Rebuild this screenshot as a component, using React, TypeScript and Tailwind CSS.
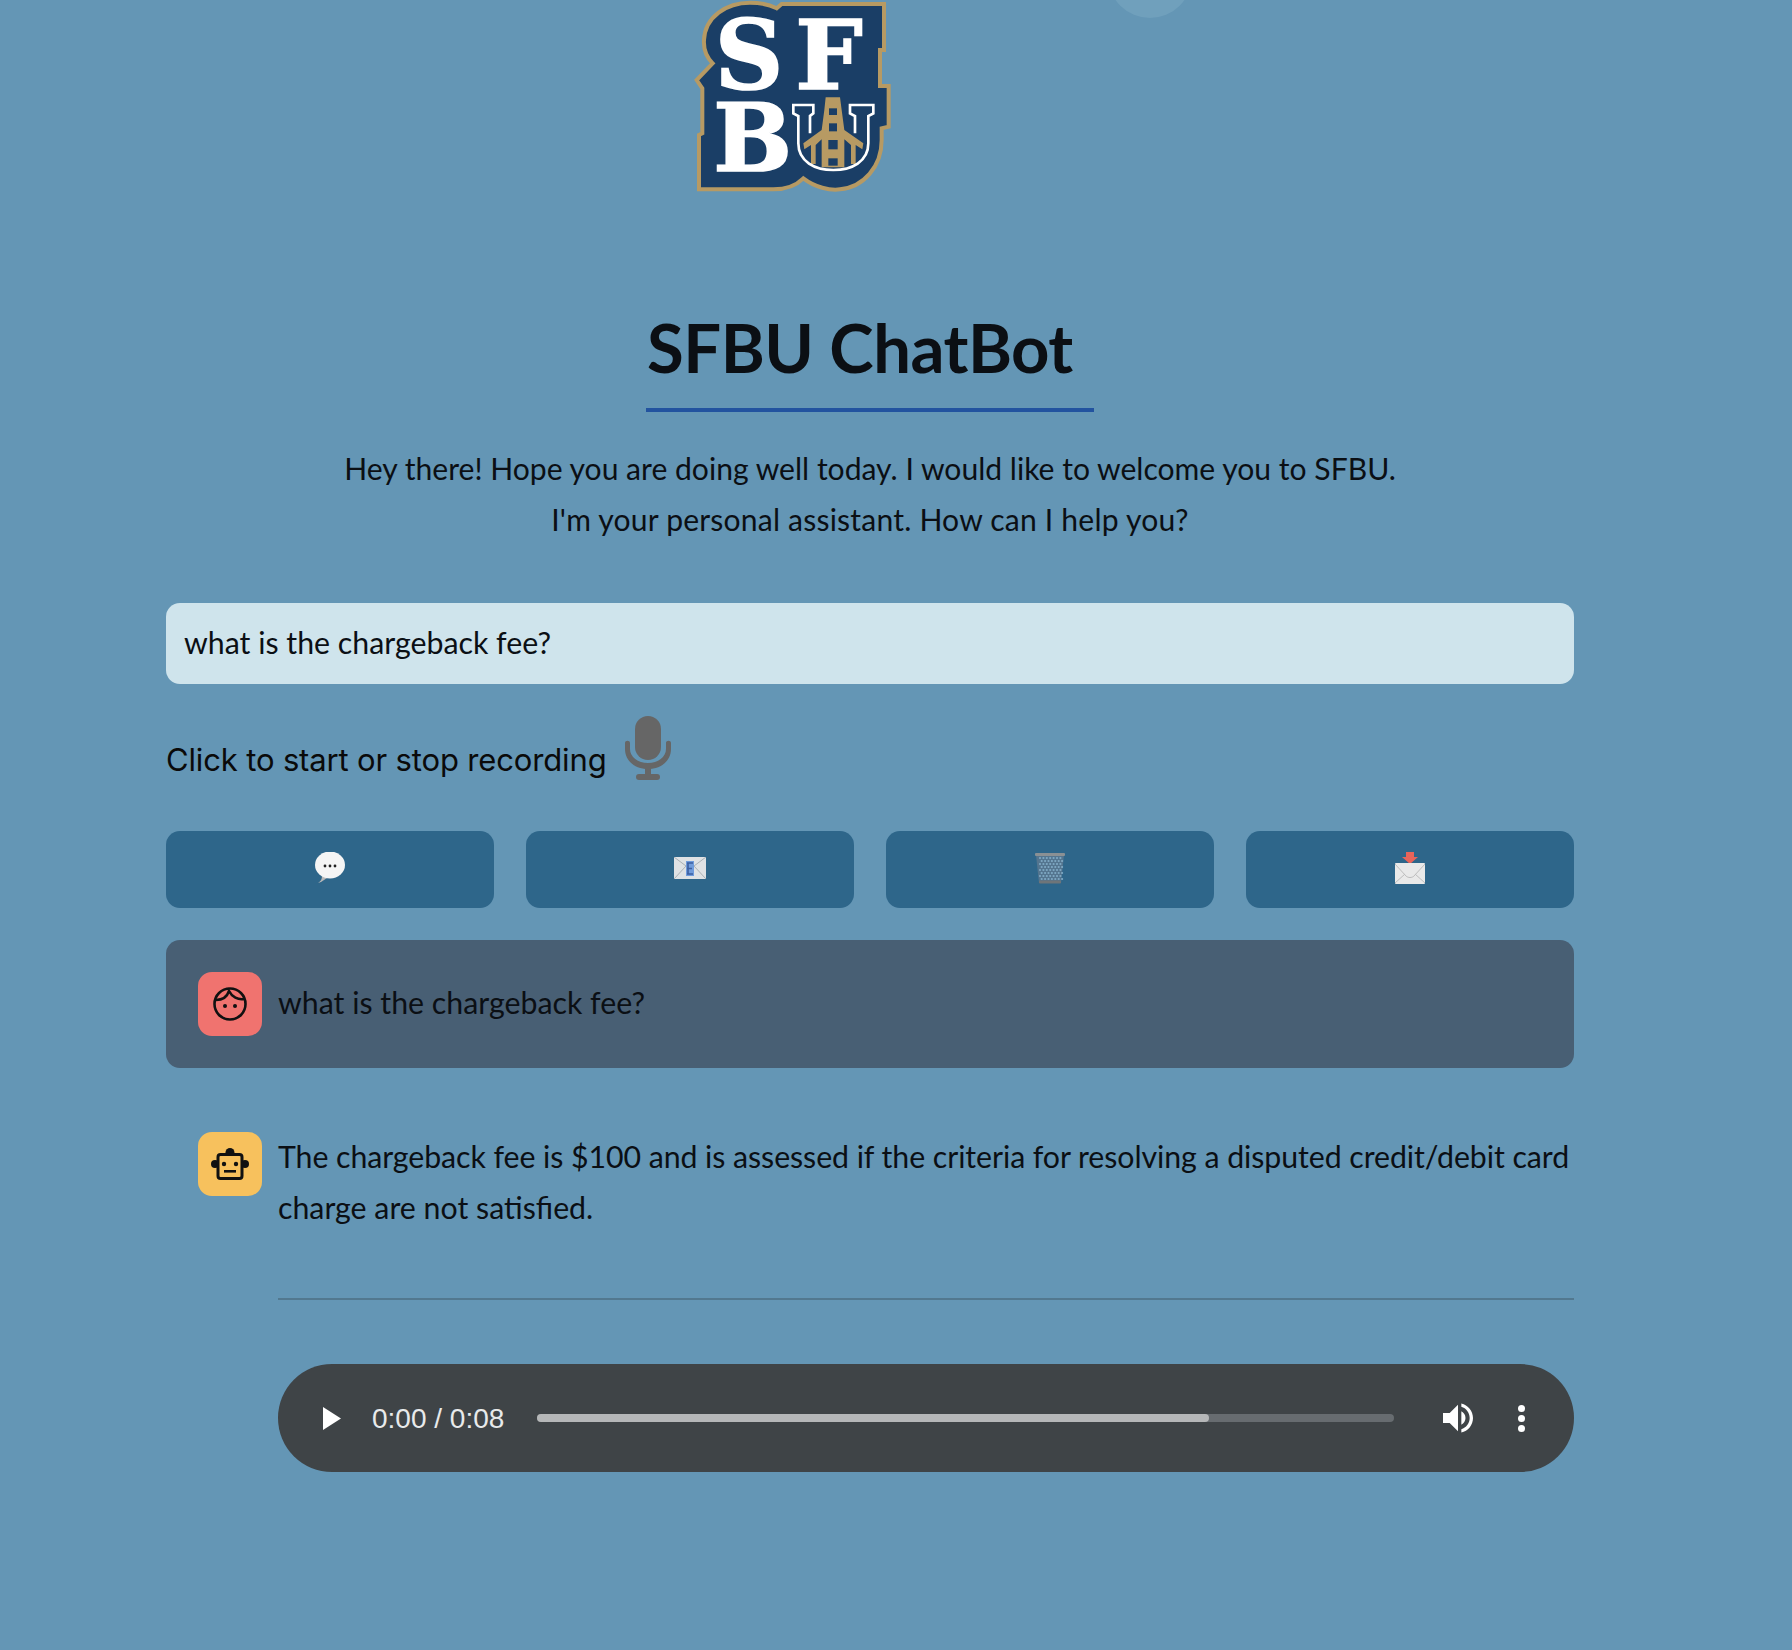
function Logo() {
  return (
    <svg viewBox="0 0 780 630" className="block w-[260px] h-[210px]">
      {/* badge */}
      <path
        d="M270 8C200 8 135 50 132 120C130 150 140 172 158 190L110 240L127 265V400L117 405V568H340C380 568 410 555 430 535C465 562 510 572 540 568C610 562 665 500 665 420V385L686 380V258H660V150H672V12H365L350 25C325 12 300 8 270 8Z"
        fill="#1a3e66"
        stroke="#b79a63"
        strokeWidth="12"
      />
      <g fill="#fff" stroke="#fff" strokeWidth="5" className="font-['DejaVu_Serif',serif] font-bold">
        <text x="164" y="268" fontSize="285">S</text>
        <text x="406" y="266" fontSize="285">F</text>
        <text x="160" y="513" fontSize="280">B</text>
      </g>
      {/* U with the bridge */}
      <g transform="translate(375 270)">
        <path d="M122 22H165L170 60L178 120L235 160L232 178L212 165V222H198V165L178 148V232H110V148L92 165V222H78V165L58 178L55 160L110 120L118 60Z" fill="#b79a63" />
        <g fill="#1a3e66">
          <rect x="132" y="55" width="24" height="20" />
          <rect x="132" y="100" width="24" height="24" />
          <rect x="130" y="150" width="28" height="28" />
          <rect x="130" y="205" width="28" height="22" />
        </g>
        <path
          d="M75 130V78L85 70V45H25V70L40 78V160C40 215 90 240 145 240C200 240 250 215 250 160V78L265 70V45H195V70L210 78V130"
          fill="none"
          stroke="#fff"
          strokeWidth="8"
        />
      </g>
    </svg>
  );
}

function MicIcon() {
  return (
    <svg viewBox="0 0 46 64" className="w-[46px] h-[64px]" fill="#666">
      <rect x="10" y="0" width="26" height="44" rx="13" />
      <path d="M0 27C0 24 5 24 5 27V33C5 41 13 47 23 47C33 47 41 41 41 33V27C41 24 46 24 46 27V33C46 45 36 53 23 53C10 53 0 45 0 33Z" />
      <rect x="20" y="52" width="6" height="8" />
      <rect x="11" y="58" width="24" height="6" rx="3" />
    </svg>
  );
}

function BalloonIcon() {
  return (
    <svg viewBox="0 0 30 32" className="w-[30px] h-[32px]">
      <path d="M3 31C6 29 7 27 7 24H15L6 30Z" fill="#b9b9b9" />
      <ellipse cx="15" cy="13" rx="15" ry="13.5" fill="#f5f5f5" />
      <circle cx="10" cy="14" r="1.4" fill="#222" />
      <circle cx="15" cy="14" r="1.4" fill="#222" />
      <circle cx="20" cy="14" r="1.4" fill="#222" />
    </svg>
  );
}

function MailIcon() {
  return (
    <svg viewBox="0 0 32 22" className="w-[32px] h-[22px]">
      <rect x="0" y="0" width="32" height="22" rx="1" fill="#dfe2e5" />
      <path d="M0 0L16 12L32 0M0 22L12 9M32 22L20 9" fill="none" stroke="#aab0b5" strokeWidth="1" />
      <rect x="12" y="4" width="8" height="15" fill="#6f9bdc" />
      <path d="M13 6H19M13 11.5H18M13 17H19M14 6V17" fill="none" stroke="#3c5fa0" strokeWidth="1.6" />
    </svg>
  );
}

function TrashIcon() {
  const holes = [];
  for (let r = 0; r < 8; r++) {
    for (let c = 0; c < 7; c++) {
      holes.push({ x: 5 + c * 3.4 + (r % 2) * 1.7, y: 6 + r * 3 });
    }
  }
  return (
    <svg viewBox="0 0 30 32" className="w-[30px] h-[32px]">
      <path d="M1 3L4 31H26L29 3Z" fill="#54758f" />
      {holes.map((h, i) => (
        <circle key={i} cx={h.x} cy={h.y} r="1.1" fill="#7fa9c4" />
      ))}
      <rect x="0" y="1" width="30" height="3" rx="1" fill="#8a9094" />
      <rect x="4" y="28.5" width="22" height="3" rx="1" fill="#6f7579" />
    </svg>
  );
}

function InboxMailIcon() {
  return (
    <svg viewBox="0 0 30 32" className="w-[30px] h-[32px]">
      <path d="M11 0H19V5H23L15 12L7 5H11Z" fill="#e8645a" />
      <rect x="0" y="11" width="30" height="21" rx="1" fill="#e9e9e9" />
      <path d="M0 12L11 24C13 26 17 26 19 24L30 12M0 31L10 22M30 31L20 22" fill="none" stroke="#bdbdbd" strokeWidth="1" />
    </svg>
  );
}

function FaceIcon() {
  return (
    <svg viewBox="0 0 36 36" className="w-[36px] h-[36px]" fill="none" stroke="#111" strokeWidth="2.6">
      <circle cx="18" cy="18" r="15.5" />
      <path d="M4 14C10 14 15 11 17 5C20 11 26 14 32 13" />
      <circle cx="13" cy="20" r="2" fill="#111" stroke="none" />
      <circle cx="23" cy="20" r="2" fill="#111" stroke="none" />
    </svg>
  );
}

function RobotIcon() {
  return (
    <svg viewBox="0 0 38 32" className="w-[38px] h-[32px]">
      <circle cx="19" cy="4.5" r="4.5" fill="#111" />
      <circle cx="4" cy="16" r="4" fill="#111" />
      <circle cx="34" cy="16" r="4" fill="#111" />
      <rect x="7" y="6.5" width="24" height="24" rx="2.5" fill="#f7c15d" stroke="#111" strokeWidth="3" />
      <circle cx="13" cy="16" r="2.2" fill="#111" />
      <circle cx="25" cy="16" r="2.2" fill="#111" />
      <rect x="13" y="22" width="12" height="2.6" fill="#111" />
    </svg>
  );
}

function VolumeIcon() {
  return (
    <svg viewBox="3 3 18 18" className="w-[30px] h-[30px]" fill="#fff">
      <path d="M3 9v6h4l5 5V4L7 9H3zm13.5 3c0-1.77-1.02-3.29-2.5-4.03v8.05c1.48-.73 2.5-2.25 2.5-4.02zM14 3.23v2.06c2.89.86 5 3.54 5 6.71s-2.11 5.85-5 6.71v2.06c4.01-.91 7-4.49 7-8.77s-2.99-7.86-7-8.77z" />
    </svg>
  );
}

const buttons = [BalloonIcon, MailIcon, TrashIcon, InboxMailIcon];

export default function App() {
  return (
    <div className="relative min-h-[1650px] overflow-hidden bg-[#6496b5] pl-[166px] font-['Lato',sans-serif] text-[#0b0f14]">
      {/* faint circle cut off by the top edge */}
      <div className="absolute left-[1108px] top-[-66px] h-[84px] w-[84px] rounded-full bg-[#70a0bc]" />

      <div className="w-[1408px]">
        <div className="ml-[494px]">
          <Logo />
        </div>

        <div className="mt-[92px] flex justify-center">
          <h1 className="w-[448px] border-b-[4px] border-[#22539f] pb-[16px] pl-[1px] text-[67px] leading-[90px] font-bold tracking-[-0.5px]">
            SFBU ChatBot
          </h1>
        </div>

        <p className="mt-[31px] text-center text-[30.1px] leading-[51px]">
          Hey there! Hope you are doing well today. I would like to welcome you to SFBU.
          <br />
          <span className="tracking-[0.19px]">I'm your personal assistant. How can I help you?</span>
        </p>

        <div className="mt-[58px] flex h-[81px] items-center rounded-[14px] bg-[#cfe4ec] px-[18px] pb-[2px] text-[30.3px]">
          what is the chargeback fee?
        </div>

        <div className="mt-[32px] flex h-[64px] items-start gap-[18px]">
          <span className="mt-[20px] font-['Inter',sans-serif] text-[31px] leading-[48px] tracking-[-0.15px] text-[#0a0a0a]">
            Click to start or stop recording
          </span>
          <MicIcon />
        </div>

        <div className="mt-[51px] grid grid-cols-4 gap-[32px]">
          {buttons.map((Icon, i) => (
            <div key={i} className="flex h-[77px] items-center justify-center rounded-[14px] bg-[#2e668a] pb-[3px]">
              <Icon />
            </div>
          ))}
        </div>

        <div className="mt-[32px] flex h-[128px] items-center gap-[16px] rounded-[14px] bg-[#485f74] px-[32px] text-[30.3px]">
          <div className="flex h-[64px] w-[64px] items-center justify-center rounded-[14px] bg-[#f0736f]">
            <FaceIcon />
          </div>
          <span className="pb-[2px]">what is the chargeback fee?</span>
        </div>

        <div className="mt-[64px] flex gap-[16px] pl-[32px]">
          <div className="flex h-[64px] w-[64px] shrink-0 items-center justify-center rounded-[14px] bg-[#f7c15d]">
            <RobotIcon />
          </div>
          <div className="flex-1">
            <p className="-mt-[1px] text-[30.3px] leading-[51px]">
              <span className="tracking-[-0.07px] whitespace-nowrap">
                The chargeback fee is $100 and is assessed if the criteria for resolving a disputed credit/debit card
              </span>
              <br />
              <span>charge are not satisfied.</span>
            </p>
            <div className="mt-[65px] h-[2px] bg-[#52788f]" />
            <div className="mt-[64px] flex h-[108px] items-center rounded-[54px] bg-[#3f4447] pl-[45px] pr-[48px]">
              <svg viewBox="0 0 18 23" className="h-[23px] w-[18px]" fill="#fff">
                <path d="M0 0L18 11.5L0 23Z" />
              </svg>
              <span className="ml-[31px] w-[133px] whitespace-nowrap pt-[2px] font-['Liberation_Sans',sans-serif] text-[28px] text-[#e8eaeb]">
                0:00 / 0:08
              </span>
              <div className="ml-[32px] h-[8px] w-[857px] rounded-full bg-[#676c70]">
                <div className="h-[8px] w-[672px] rounded-full bg-[#b5b7b8]" />
              </div>
              <div className="ml-[49px]">
                <VolumeIcon />
              </div>
              <div className="ml-[45px] flex flex-col gap-[3px]">
                <span className="h-[7px] w-[7px] rounded-full bg-white" />
                <span className="h-[7px] w-[7px] rounded-full bg-white" />
                <span className="h-[7px] w-[7px] rounded-full bg-white" />
              </div>
            </div>
          </div>
        </div>
      </div>
    </div>
  );
}
